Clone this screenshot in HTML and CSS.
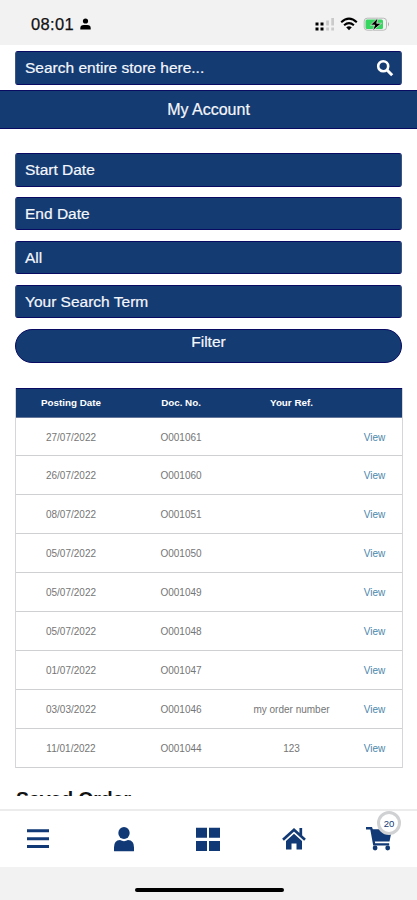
FILE: index.html
```html
<!DOCTYPE html>
<html lang="en">
<head>
<meta charset="utf-8">
<title>My Account</title>
<link rel="stylesheet" href="styles.css">
</head>
<body>
<div class="phone">
  <header class="status">
    <span class="clock">08:01</span>
    <svg class="status-user" width="11" height="12" viewBox="0 0 11 12"><circle cx="5.5" cy="3" r="2.6"/><path d="M0.3 11.5V10Q0.3 7 3.8 7H7.2Q10.7 7 10.7 10V11.5Z"/></svg>
    <svg class="signals" width="76" height="16" viewBox="0 0 76 16">
      <path d="M.5 6.5h3v3h-3zM5.5 6.5h3v3h-3zM.5 11.5h3v3h-3zM5.5 11.5h3v3h-3z"/>
      <path fill="#cacaca" d="M11.2 4.5h2.7v5h-2.7zM16.3 2h2.7v7.5h-2.7zM11.2 11.5h2.7v3h-2.7zM16.3 11.5h2.7v3h-2.7z"/>
      <g fill="none" stroke="#000" stroke-width="2.1"><path d="M26.2 6.2Q34 -.8 41.8 6.2"/><path d="M29.1 9.2Q34 5 38.9 9.2"/></g>
      <path d="M31.2 11.3Q34 9 36.8 11.3L34 14.2Z"/>
      <rect x="49.2" y="2.2" width="22.3" height="12" rx="3" fill="#f2f2f2" stroke="#b8b8b8"/>
      <rect x="50.5" y="3.5" width="17.5" height="9.5" rx="1.5" fill="#37d660"/>
      <path d="M73 6q2 2.2 0 4.5z" fill="#aaa"/>
      <path d="M63 1.8L55.5 9.1h4.2L57.5 14.8L66.5 7.3h-4.8z" stroke="#f2f2f2" stroke-width=".7"/>
    </svg>
  </header>
  <main class="content">
    <div class="search-row"><div class="field search"><span>Search entire store here...</span>
      <svg width="18" height="18" viewBox="0 0 18 18" fill="none" stroke="#fff"><circle cx="7.2" cy="7.2" r="5" stroke-width="2.6"/><path d="M11 11l5.2 5.2" stroke-width="3"/></svg>
    </div></div>
    <div class="account">My Account</div>
    <form class="filters">
      <div class="field">Start Date</div>
      <div class="field">End Date</div>
      <div class="field">All</div>
      <div class="field">Your Search Term</div>
      <button class="filter" type="button">Filter</button>
    </form>
    <table class="orders">
      <colgroup><col class="date"><col class="doc"><col class="ref"><col class="action"></colgroup>
      <thead><tr><th>Posting Date</th><th>Doc. No.</th><th>Your Ref.</th><th></th></tr></thead>
      <tbody>
        <tr><td>27/07/2022</td><td>O001061</td><td></td><td><a>View</a></td></tr>
        <tr><td>26/07/2022</td><td>O001060</td><td></td><td><a>View</a></td></tr>
        <tr><td>08/07/2022</td><td>O001051</td><td></td><td><a>View</a></td></tr>
        <tr><td>05/07/2022</td><td>O001050</td><td></td><td><a>View</a></td></tr>
        <tr><td>05/07/2022</td><td>O001049</td><td></td><td><a>View</a></td></tr>
        <tr><td>05/07/2022</td><td>O001048</td><td></td><td><a>View</a></td></tr>
        <tr><td>01/07/2022</td><td>O001047</td><td></td><td><a>View</a></td></tr>
        <tr><td>03/03/2022</td><td>O001046</td><td>my order number</td><td><a>View</a></td></tr>
        <tr><td>11/01/2022</td><td>O001044</td><td>123</td><td><a>View</a></td></tr>
      </tbody>
    </table>
    <h2 class="saved">Saved Order</h2>
  </main>
  <nav class="tabs">
    <svg class="menu" width="22" height="26" viewBox="0 0 22 26"><path d="M0 3.3h22v3H0zM0 11.3h22v3H0zM0 19h22v3H0z"/></svg>
    <svg class="user" width="22" height="26" viewBox="0 0 22 26"><ellipse cx="11" cy="7" rx="5.7" ry="6.1"/><path d="M1 25V21.5Q1 14 7 14Q11 16.3 15 14Q21 14 21 21.5V25Q21 25.3 20 25.3H2Q1 25.3 1 25Z"/></svg>
    <svg class="tiles" width="24" height="26" viewBox="0 0 24 26"><path d="M0 1.8h11v10H0zM13 1.8h11v10H13zM0 15h11v10H0zM13 15h11v10H13z"/></svg>
    <svg class="house" width="24" height="26" viewBox="0 0 24 26"><path d="M1 13.7L12 3.8l11 9.9M18.8 9.5V2" fill="none" stroke="#103975" stroke-width="2.7"/><path d="M4 15L12 7.8l8 7.2V23.5h-5.5v-6h-5v6H4Z"/></svg>
    <div class="cart">
      <svg width="27" height="26" viewBox="0 0 27 26"><path d="M0 1h6l.8 2.2H26L23.5 15.5H8.8l.4 1.8h14v2.3H7.2L4.3 3.5H0Z"/><circle cx="9.1" cy="22" r="2.4"/><circle cx="21.7" cy="22" r="2.4"/></svg>
      <span class="badge">20</span>
    </div>
  </nav>
  <footer class="home"><div class="indicator"></div></footer>
</div>
</body>
</html>
```
FILE: styles.css
```css
* { box-sizing: border-box; }
body { margin: 0; background: #fff; font-family: "Liberation Sans", Arial, sans-serif; }
.phone { width: 417px; height: 900px; display: flex; flex-direction: column; overflow: hidden; }
.status { height: 45px; flex: none; display: flex; align-items: center; padding: 3px 26px 0 31px; background: #f2f2f2; }
.clock { font-size: 16.5px; letter-spacing: .35px; -webkit-text-stroke: .25px #111; color: #111; }
.status-user { margin-left: 6px; }
.signals { margin-left: auto; }
.content { height: 751px; flex: none; overflow: hidden; }
.search-row { padding: 6px 15px 5px; }
.field { height: 33.5px; padding: 1px 10px 0 9px; display: flex; align-items: center; border: 1px solid #090b62; border-left-color: #3d5480; border-right-color: #3d5480; border-radius: 3px; background: #143b72; color: #f4f7fc; font-size: 15.5px; -webkit-text-stroke: .2px #f4f7fc; }
.search { height: 34px; padding: 0 7px 1px 9px; justify-content: space-between; }
.account { height: 39px; display: flex; align-items: center; justify-content: center; padding-top: 1px; background: #143b72; border: solid #090b62; border-width: 1px 0; color: #f4f7fc; font-size: 16px; -webkit-text-stroke: .2px #f4f7fc; }
.filters { display: flex; flex-direction: column; gap: 10.4px; margin: 24px 15px 0; }
.filter { height: 34px; padding: 3px 0 0; display: flex; justify-content: center; align-items: flex-start; border: 1px solid #090b62; border-radius: 17px; background: #143b72; color: #f4f7fc; font: 15.5px "Liberation Sans", Arial, sans-serif; -webkit-text-stroke: .2px #f4f7fc; }
.orders { width: 388px; margin: 25px 0 0 15px; border-collapse: separate; border-spacing: 0; table-layout: fixed; border: solid #d4d6d9; border-width: 0 1px; font-size: 10px; }
.date, .doc { width: 110px; }
.ref { width: 111px; }
.orders th { height: 30px; padding: 0; background: #143b72; border-top: 1px solid #090b62; border-bottom: 1px solid #65789b; color: #fff; font-size: 9.8px; }
.orders td { height: 38.9px; padding: 1px 0 0; text-align: center; color: #757575; border-bottom: 1px solid #cfd0d2; }
.orders a { color: #4b86ab; }
.saved { margin: 19px 0 0 16px; color: #111; font-size: 19.5px; line-height: 24px; letter-spacing: -.1px; }
.tabs { height: 58px; flex: none; margin-top: 13px; padding: 0 24px 0 27px; display: flex; align-items: center; border-top: 2px solid #ececed; background: #fff; }
.tabs svg { display: block; fill: #103975; }
.user { margin-left: 64px; }
.tiles { margin-left: 61px; }
.house { margin-left: 62px; }
.cart { position: relative; margin-left: 60px; }
.badge { position: absolute; left: 11px; top: -15px; width: 24px; height: 24px; border: 3px solid #d0d1d3; border-radius: 50%; background: #fff; color: #103975; font-size: 9.5px; line-height: 20px; text-align: center; }
.home { height: 33px; flex: none; display: flex; justify-content: center; align-items: flex-start; padding: 21px 0 0 1px; background: #f2f2f2; }
.indicator { width: 149px; height: 4px; border-radius: 2px; background: #000; }
```
